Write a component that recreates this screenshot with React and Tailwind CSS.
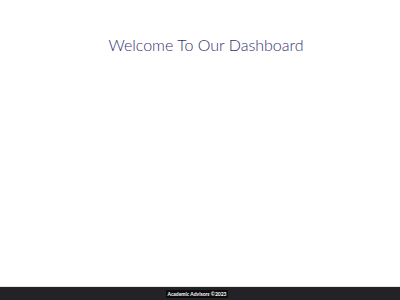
export default function App() {
  return (
    <div className="flex min-h-[300px] w-[400px] flex-col bg-white">
      <main className="flex-1 pt-[34px] pl-[12px] text-center">
        <h1 className="text-[16px] leading-[21px] font-light text-[#35326f]" style={{ fontFamily: 'Lato, sans-serif' }}>
          Welcome To Our Dashboard
        </h1>
      </main>
      <footer className="flex h-[14px] items-center justify-center border-t border-[#e5e5e5] bg-[#232327] pr-[6px]">
        <span className="bg-[#0c0c0e] px-[1px] text-[5px] leading-[8px] font-bold text-white" style={{ fontFamily: 'Lato, sans-serif' }}>
          Academic Advisors ©2023
        </span>
      </footer>
    </div>
  );
}
